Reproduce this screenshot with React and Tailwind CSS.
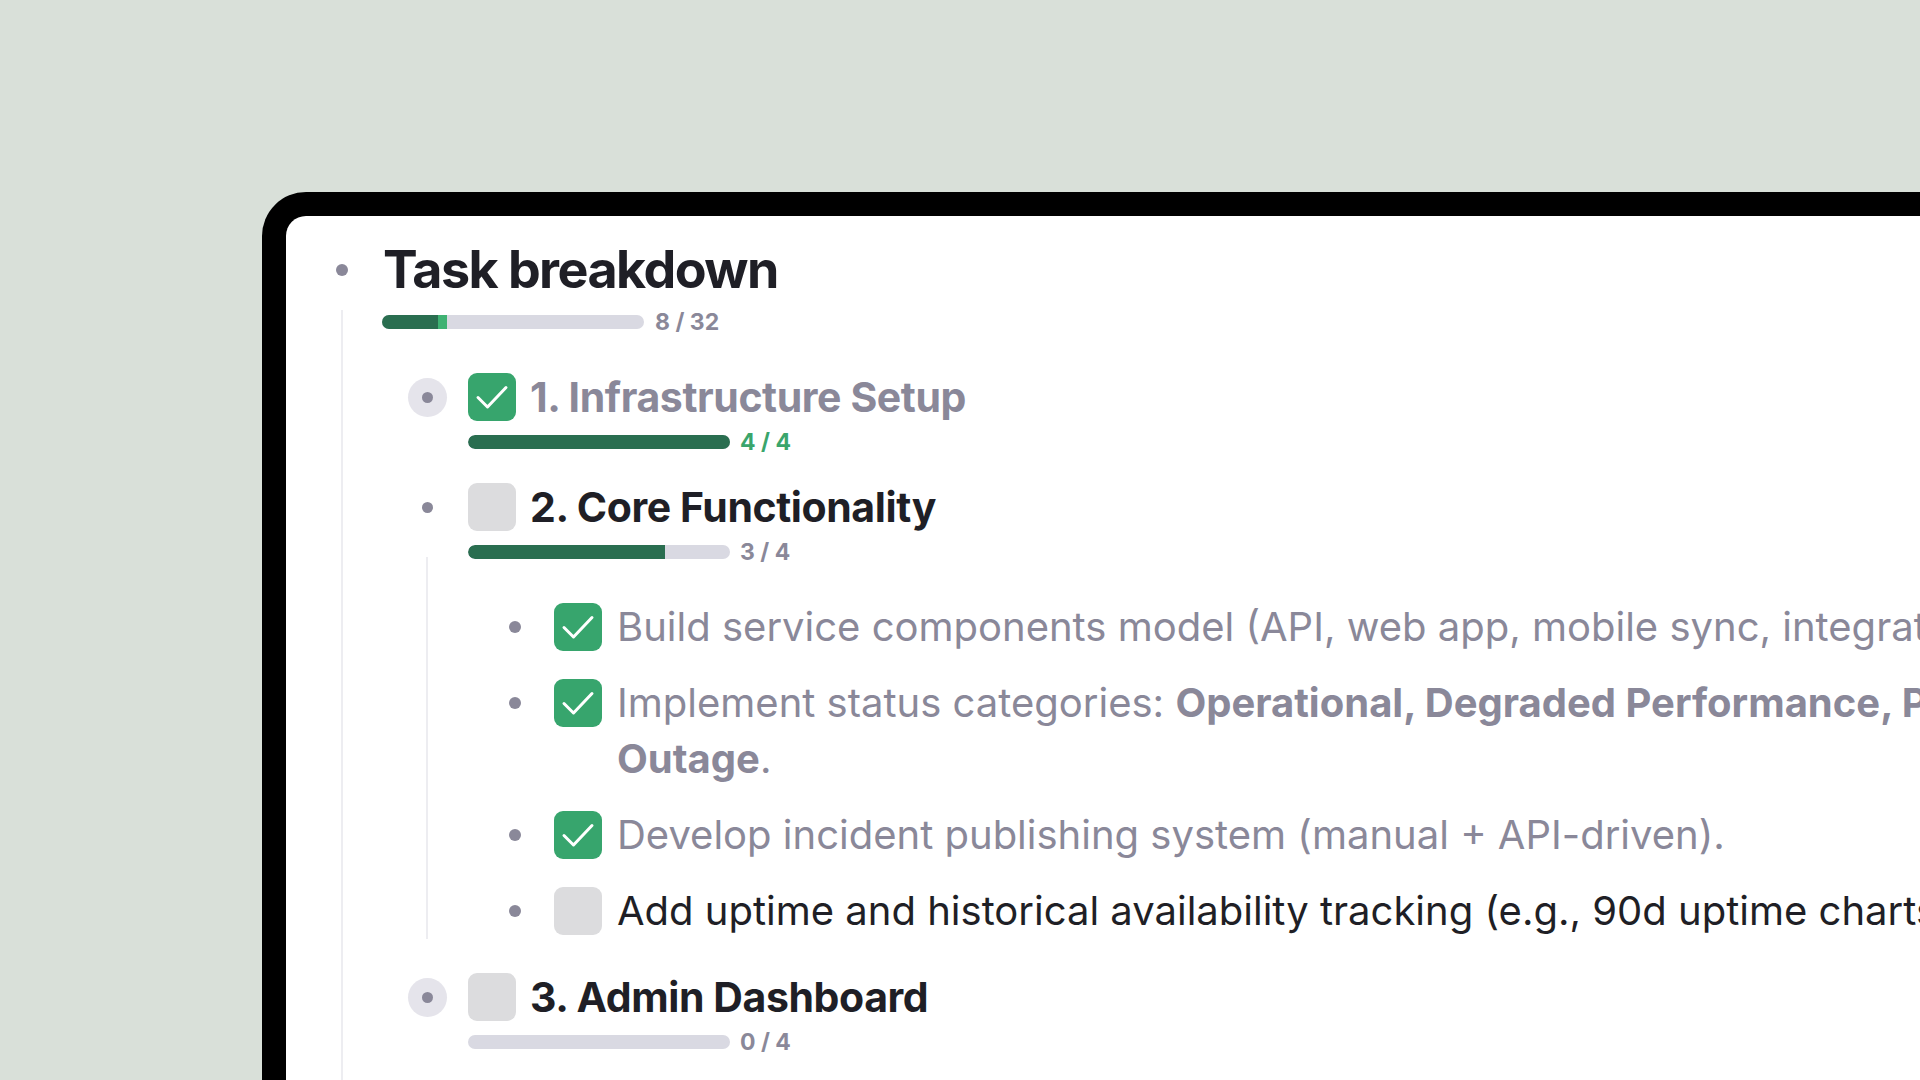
import React from 'react';

// outline task list, shown zoomed inside a device frame

const groups = [
  {
    title: '1. Infrastructure Setup',
    done: 4,
    total: 4,
    checked: true,
    collapsed: true,
  },
  {
    title: '2. Core Functionality',
    done: 3,
    total: 4,
    checked: false,
    collapsed: false,
    tasks: [
      {
        checked: true,
        text: 'Build service components model (API, web app, mobile sync, integrations).',
      },
      {
        checked: true,
        text: 'Implement status categories: ',
        strong: 'Operational, Degraded Performance, Partial Outage, Major Outage',
        tail: '.',
      },
      {
        checked: true,
        text: 'Develop incident publishing system (manual + API-driven).',
      },
      {
        checked: false,
        text: 'Add uptime and historical availability tracking (e.g., 90d uptime charts).',
      },
    ],
  },
  {
    title: '3. Admin Dashboard',
    done: 0,
    total: 4,
    checked: false,
    collapsed: true,
  },
];

function Check() {
  return (
    <svg viewBox="0 0 48 48" className="h-[48px] w-[48px]" fill="none">
      <path
        d="M10 24.5 19.5 34 38 14.5"
        stroke="white"
        strokeWidth="3"
        strokeLinecap="round"
        strokeLinejoin="round"
      />
    </svg>
  );
}

function Box({ checked }) {
  if (checked) {
    return (
      <div className="flex h-[48px] w-[48px] shrink-0 items-center justify-center rounded-[9px] bg-[#37a56d]">
        <Check />
      </div>
    );
  }
  return <div className="h-[48px] w-[48px] shrink-0 rounded-[9px] bg-[#dcdcde]" />;
}

function Bullet({ collapsed }) {
  return (
    <div className="flex w-[40px] shrink-0 items-center justify-center">
      <div className={collapsed ? 'flex h-[39px] w-[39px] items-center justify-center rounded-full bg-[#e5e4eb]' : 'flex h-[39px] w-[39px] items-center justify-center'}>
        <div className="h-[11px] w-[11px] rounded-full bg-[#8a8899]" />
      </div>
    </div>
  );
}

function Progress({ done, total, accent }) {
  const pct = total ? (done / total) * 100 : 0;
  return (
    <div className="flex h-[14px] items-center gap-[10px]">
      <div className="h-[14px] w-[262px] overflow-hidden rounded-full bg-[#d9d9e2]">
        <div className="h-full rounded-l-full bg-[#2a6e50]" style={{ width: `${pct}%` }} />
      </div>
      <span className={`text-[23px] font-bold leading-none ${accent ? 'text-[#3aa56c]' : 'text-[#8a8899]'}`}>
        {done} / {total}
      </span>
    </div>
  );
}

function Task({ task }) {
  const tone = task.checked ? 'text-[#8a8899]' : 'text-[#1f1f26]';
  return (
    <div className="flex items-start">
      <div className="flex h-[56px] w-[40px] shrink-0 items-center justify-center">
        <div className="h-[12px] w-[12px] rounded-full bg-[#8a8899]" />
      </div>
      <div className="ml-[19px] mt-[4px]">
        <Box checked={task.checked} />
      </div>
      <p className={`ml-[15px] max-w-[1730px] text-[40px] leading-[56px] ${tone}`}>
        {task.text}
        {task.strong && <strong className="font-bold">{task.strong}</strong>}
        {task.tail}
      </p>
    </div>
  );
}

function Group({ group, first }) {
  const tone = group.checked ? 'text-[#8a8899]' : 'text-[#1f1f26]';
  return (
    <div className={first ? 'ml-[25px]' : 'ml-[25px] mt-[34px]'}>
      <div className="flex h-[48px] items-center">
        <Bullet collapsed={group.collapsed} />
        <div className="ml-[21px]">
          <Box checked={group.checked} />
        </div>
        <h2 className={`ml-[14px] text-[41px] font-bold leading-[48px] tracking-[-0.01em] ${tone}`}>{group.title}</h2>
      </div>
      <div className="ml-[61px] mt-[14px]">
        <Progress done={group.done} total={group.total} accent={group.done === group.total} />
      </div>
      {group.tasks && (
        <div className="ml-[19px] mt-[-2px] border-l-2 border-[#ededf1] pl-[67px] pt-[42px]">
          <div className="flex flex-col gap-[20px]">
            {group.tasks.map((t) => (
              <Task key={t.text} task={t} />
            ))}
          </div>
        </div>
      )}
    </div>
  );
}

export default function App() {
  return (
    <div className="h-screen w-screen overflow-hidden bg-[#d9e0d9] pl-[262px] pt-[192px] font-['Inter',sans-serif]">
      <div className="h-[1000px] w-[2300px] rounded-tl-[44px] bg-black pl-[24px] pt-[24px]">
        <div className="h-full rounded-tl-[20px] bg-white pl-[41px] pt-[22px]">
          <div className="flex h-[64px] items-center">
            <div className="flex w-[30px] justify-center">
              <div className="h-[12px] w-[12px] rounded-full bg-[#8a8899]" />
            </div>
            <h1 className="ml-[26px] text-[52px] font-bold leading-[64px] tracking-[-0.03em] text-[#1f1f26]">Task breakdown</h1>
          </div>
          <div className="ml-[14px] mt-[8px] h-[900px] border-l-2 border-[#ededf1] pl-[39px] pt-[5px]">
            <div className="flex h-[14px] items-center gap-[11px]">
              <div className="flex h-[14px] w-[262px] overflow-hidden rounded-full bg-[#d9d9e2]">
                <div className="h-full w-[56px] bg-[#2a6e50]" />
                <div className="h-full w-[9px] bg-[#3fb273]" />
              </div>
              <span className="text-[23px] font-bold leading-none text-[#8a8899]">8 / 32</span>
            </div>
            <div className="mt-[44px]">
              {groups.map((g, i) => (
                <Group key={g.title} group={g} first={i === 0} />
              ))}
            </div>
          </div>
        </div>
      </div>
    </div>
  );
}
